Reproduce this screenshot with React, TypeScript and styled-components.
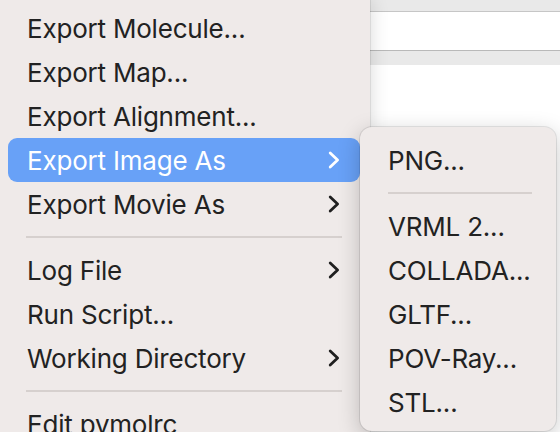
import React from "react";
import styled, { createGlobalStyle } from "styled-components";

const Global = createGlobalStyle`
  html, body { margin: 0; padding: 0; background: #ffffff; }
  body { font-family: Inter, "Liberation Sans", sans-serif; -webkit-font-smoothing: antialiased; }
`;

const Stage = styled.div`
  position: relative;
  width: 560px;
  height: 432px;
  overflow: hidden;
  background: #ffffff;
`;

const Window = styled.div`
  display: flex;
  flex-direction: column;
  width: 100%;
  height: 100%;
`;

const Band = styled.div<{ $h: number; $bg: string; $line?: string }>`
  flex: 0 0 ${(p) => p.$h}px;
  background: ${(p) => p.$bg};
  border-bottom: ${(p) => (p.$line ? `1px solid ${p.$line}` : "none")};
`;

const Fill = styled.div`
  flex: 1;
  background: #ffffff;
`;

const Menu = styled.div<{ $left: number; $top: number; $w: number }>`
  position: absolute;
  left: ${(p) => p.$left}px;
  top: ${(p) => p.$top}px;
  width: ${(p) => p.$w}px;
  box-sizing: border-box;
  background: #efeae9;
  display: flex;
  flex-direction: column;
`;

const MainMenu = styled(Menu)`
  padding: 6px 10px 20px 10px;
  box-shadow: 0 0 18px rgba(0, 0, 0, 0.16), 1px 0 0 rgba(0, 0, 0, 0.08);
`;

const SubMenu = styled(Menu)`
  padding: 11px 0 7px 0;
  border-radius: 12px;
  box-shadow: 0 6px 22px rgba(0, 0, 0, 0.22), 0 0 0 1px rgba(0, 0, 0, 0.09);
  z-index: 2;
`;

const Item = styled.div<{ $active?: boolean; $inset: number }>`
  height: 44px;
  display: flex;
  align-items: center;
  justify-content: space-between;
  padding: 0 20px 0 ${(p) => p.$inset}px;
  border-radius: 9px;
  background: ${(p) => (p.$active ? "#68a1f7" : "transparent")};
  color: ${(p) => (p.$active ? "#ffffff" : "#222222")};
  font-size: 26px;
  letter-spacing: -0.2px;
  white-space: nowrap;
`;

const Sep = styled.div<{ $l: number; $r: number }>`
  height: 22px;
  display: flex;
  align-items: center;
  padding: 0 ${(p) => p.$r}px 0 ${(p) => p.$l}px;
  &::after {
    content: "";
    flex: 1;
    height: 2px;
    background: #d6d0ce;
  }
`;

const Chevron = ({ color }: { color: string }) => (
  <svg width="12" height="18" viewBox="0 0 12 18">
    <polyline
      points="2.2,2 9.6,9 2.2,16"
      fill="none"
      stroke={color}
      strokeWidth="2.8"
      strokeLinecap="round"
      strokeLinejoin="round"
    />
  </svg>
);

type Entry = { label?: string; sub?: boolean; active?: boolean; sep?: boolean };

const mainItems: Entry[] = [
  { label: "Export Molecule..." },
  { label: "Export Map..." },
  { label: "Export Alignment..." },
  { label: "Export Image As", sub: true, active: true },
  { label: "Export Movie As", sub: true },
  { sep: true },
  { label: "Log File", sub: true },
  { label: "Run Script..." },
  { label: "Working Directory", sub: true },
  { sep: true },
  { label: "Edit pymolrc" },
];

const subItems: Entry[] = [
  { label: "PNG..." },
  { sep: true },
  { label: "VRML 2..." },
  { label: "COLLADA..." },
  { label: "GLTF..." },
  { label: "POV-Ray..." },
  { label: "STL..." },
];

export default function App() {
  return (
    <Stage>
      <Global />
      <Window>
        <Band $h={11} $bg="#e9e9e9" $line="#c6c6c6" />
        <Band $h={38} $bg="#ffffff" $line="#b9b9b9" />
        <Band $h={14} $bg="#e9e9e9" />
        <Fill />
      </Window>
      <MainMenu $left={-2} $top={0} $w={372}>
        {mainItems.map((it, i) =>
          it.sep ? (
            <Sep key={i} $l={18} $r={18} />
          ) : (
            <Item key={i} $active={it.active} $inset={19}>
              <span>{it.label}</span>
              {it.sub && <Chevron color={it.active ? "#ffffff" : "#1f1f1f"} />}
            </Item>
          )
        )}
      </MainMenu>
      <SubMenu $left={360} $top={127} $w={196}>
        {subItems.map((it, i) =>
          it.sep ? (
            <Sep key={i} $l={28} $r={24} />
          ) : (
            <Item key={i} $inset={28}>
              <span>{it.label}</span>
            </Item>
          )
        )}
      </SubMenu>
    </Stage>
  );
}
